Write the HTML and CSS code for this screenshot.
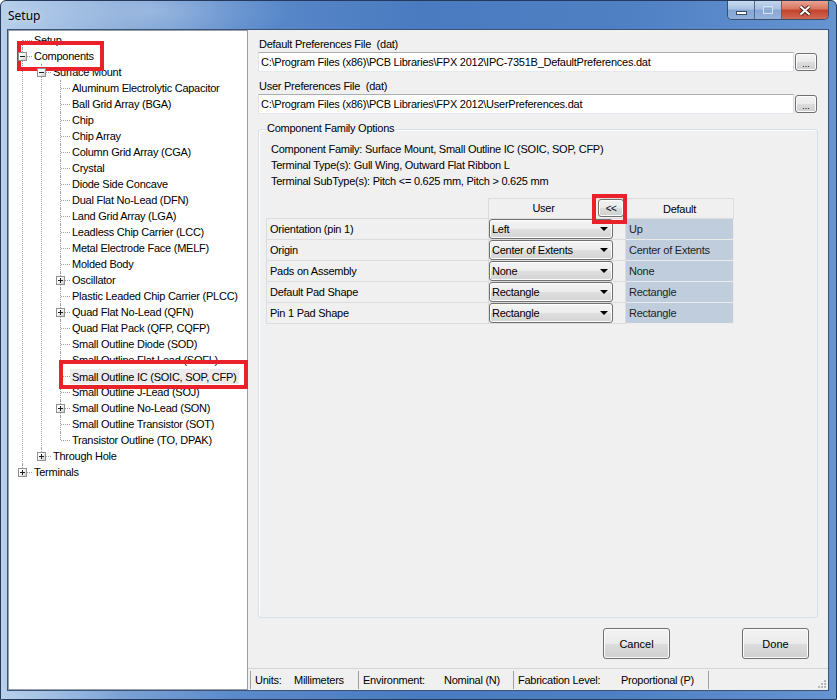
FILE: index.html
```html
<!DOCTYPE html>
<html>
<head>
<meta charset="utf-8">
<title>Setup</title>
<link rel="stylesheet" href="styles.css">
</head>
<body>
<div class="window">
  <div class="titlebar">
    <span class="title">Setup</span>
    <div class="caption">
      <span class="cbtn min"><svg width="13" height="6" viewBox="0 0 13 6"><rect x="1.5" y="1.5" width="10" height="3" fill="#fff" stroke="#3a4a60"/></svg></span>
      <span class="cbtn max"><svg width="12" height="10" viewBox="0 0 12 10"><rect x="1.5" y="1.5" width="9" height="7" fill="none" stroke="#d8e4f2" stroke-width="1"/><rect x="2.5" y="3.5" width="7" height="4" fill="none" stroke="#8fa9cc"/></svg></span>
      <span class="cbtn close"><svg width="14" height="11" viewBox="0 0 14 11"><path d="M2.5 1.5 L11.5 9.5 M11.5 1.5 L2.5 9.5" stroke="#4a2420" stroke-width="4"/><path d="M2.5 1.5 L11.5 9.5 M11.5 1.5 L2.5 9.5" stroke="#fff" stroke-width="2"/></svg></span>
    </div>
  </div>
  <div class="client">
    <div class="tree">
      <ul>
        <li><div class="row"><span class="txt">Setup</span></div></li>
        <li><div class="row"><span class="exp"></span><span class="txt">Components</span></div>
          <ul>
            <li><div class="row"><span class="exp"></span><span class="txt">Surface Mount</span></div>
              <ul>
                <li><div class="row"><span class="txt">Aluminum Electrolytic Capacitor</span></div></li>
                <li><div class="row"><span class="txt">Ball Grid Array (BGA)</span></div></li>
                <li><div class="row"><span class="txt">Chip</span></div></li>
                <li><div class="row"><span class="txt">Chip Array</span></div></li>
                <li><div class="row"><span class="txt">Column Grid Array (CGA)</span></div></li>
                <li><div class="row"><span class="txt">Crystal</span></div></li>
                <li><div class="row"><span class="txt">Diode Side Concave</span></div></li>
                <li><div class="row"><span class="txt">Dual Flat No-Lead (DFN)</span></div></li>
                <li><div class="row"><span class="txt">Land Grid Array (LGA)</span></div></li>
                <li><div class="row"><span class="txt">Leadless Chip Carrier (LCC)</span></div></li>
                <li><div class="row"><span class="txt">Metal Electrode Face (MELF)</span></div></li>
                <li><div class="row"><span class="txt">Molded Body</span></div></li>
                <li><div class="row"><span class="exp plus"></span><span class="txt">Oscillator</span></div></li>
                <li><div class="row"><span class="txt">Plastic Leaded Chip Carrier (PLCC)</span></div></li>
                <li><div class="row"><span class="exp plus"></span><span class="txt">Quad Flat No-Lead (QFN)</span></div></li>
                <li><div class="row"><span class="txt">Quad Flat Pack (QFP, CQFP)</span></div></li>
                <li><div class="row"><span class="txt">Small Outline Diode (SOD)</span></div></li>
                <li><div class="row"><span class="txt">Small Outline Flat Lead (SOFL)</span></div></li>
                <li><div class="row"><span class="txt sel">Small Outline IC (SOIC, SOP, CFP)</span></div></li>
                <li><div class="row"><span class="txt">Small Outline J-Lead (SOJ)</span></div></li>
                <li><div class="row"><span class="exp plus"></span><span class="txt">Small Outline No-Lead (SON)</span></div></li>
                <li><div class="row"><span class="txt">Small Outline Transistor (SOT)</span></div></li>
                <li><div class="row"><span class="txt">Transistor Outline (TO, DPAK)</span></div></li>
              </ul>
            </li>
            <li><div class="row"><span class="exp plus"></span><span class="txt">Through Hole</span></div></li>
          </ul>
        </li>
        <li><div class="row"><span class="exp plus"></span><span class="txt">Terminals</span></div></li>
      </ul>
    </div>
    <div class="main">
      <div class="lbl">Default Preferences File&nbsp; (dat)</div>
      <div class="filerow">
        <div class="textbox">C:\Program Files (x86)\PCB Libraries\FPX 2012\IPC-7351B_DefaultPreferences.dat</div>
        <span class="btn browse">...</span>
      </div>
      <div class="lbl">User Preferences File&nbsp; (dat)</div>
      <div class="filerow">
        <div class="textbox">C:\Program Files (x86)\PCB Libraries\FPX 2012\UserPreferences.dat</div>
        <span class="btn browse">...</span>
      </div>
      <div class="group">
        <div class="group-title">Component Family Options</div>
        <div class="info first">Component Family: Surface Mount, Small Outline IC (SOIC, SOP, CFP)</div>
        <div class="info">Terminal Type(s): Gull Wing, Outward Flat Ribbon L</div>
        <div class="info">Terminal SubType(s): Pitch &lt;= 0.625 mm, Pitch &gt; 0.625 mm</div>
        <div class="grid">
          <div class="cell hd blank"></div>
          <div class="cell hd user"><span class="hdtxt">User</span><span class="btn copy">&lt;&lt;</span></div>
          <div class="cell hd deflt">Default</div>

          <div class="cell name">Orientation (pin 1)</div>
          <div class="cell ucell"><div class="combo">Left<span class="arrow"></span></div></div>
          <div class="cell dval">Up</div>

          <div class="cell name">Origin</div>
          <div class="cell ucell"><div class="combo">Center of Extents<span class="arrow"></span></div></div>
          <div class="cell dval">Center of Extents</div>

          <div class="cell name">Pads on Assembly</div>
          <div class="cell ucell"><div class="combo">None<span class="arrow"></span></div></div>
          <div class="cell dval">None</div>

          <div class="cell name">Default Pad Shape</div>
          <div class="cell ucell"><div class="combo">Rectangle<span class="arrow"></span></div></div>
          <div class="cell dval">Rectangle</div>

          <div class="cell name">Pin 1 Pad Shape</div>
          <div class="cell ucell"><div class="combo">Rectangle<span class="arrow"></span></div></div>
          <div class="cell dval">Rectangle</div>
        </div>
      </div>
      <div class="actions">
        <span class="btn push">Cancel</span>
        <span class="btn push done">Done</span>
      </div>
      <div class="status">
        <div class="sp p1"><span class="k k1">Units:</span><span>Millimeters</span></div>
        <div class="sp p2"><span class="k k2">Environment:</span><span>Nominal (N)</span></div>
        <div class="sp p3"><span class="k k3">Fabrication Level:</span><span>Proportional (P)</span></div>
        <svg class="grip" width="10" height="10" viewBox="0 0 10 10">
          <rect x="7" y="1" width="2" height="2" fill="#b8b8b8"/>
          <rect x="4" y="4" width="2" height="2" fill="#b8b8b8"/>
          <rect x="7" y="4" width="2" height="2" fill="#b8b8b8"/>
          <rect x="1" y="7" width="2" height="2" fill="#b8b8b8"/>
          <rect x="4" y="7" width="2" height="2" fill="#b8b8b8"/>
          <rect x="7" y="7" width="2" height="2" fill="#b8b8b8"/>
        </svg>
      </div>
    </div>
  </div>
  <div class="mark m1"></div>
  <div class="mark m2"></div>
  <div class="mark m3"></div>
</div>
</body>
</html>
```
FILE: styles.css
```css
html, body {
  margin: 0;
  padding: 0;
  background: #ffffff;
}

.window {
  position: relative;
  width: 837px;
  height: 700px;
  box-sizing: border-box;
  border: 1px solid #26395a;
  border-radius: 6px 6px 0 0;
  padding: 0 7px 8px 6px;
  display: flex;
  flex-direction: column;
  background:
    radial-gradient(ellipse 140px 40px at 150px 10px, rgba(255,255,255,0.28), rgba(255,255,255,0) 100%),
    linear-gradient(to right, #b9d0ea 0%, #a2bfe3 6%, #7aa1d4 15%, #5b8acb 28%, #4a7bc0 50%, #4f80c4 75%, #6594d0 100%);
  font-family: "Liberation Sans", Arial, sans-serif;
  font-size: 11px;
  color: #000;
}

/* ---------- title bar ---------- */
.titlebar {
  height: 28px;
  display: flex;
  align-items: center;
  padding-left: 1px;
}
.title {
  font-family: "Noto Sans", "Open Sans", sans-serif;
  font-size: 12px;
  color: #000;
  text-shadow: 0 0 6px rgba(255,255,255,0.8);
}
.caption {
  margin-left: auto;
  align-self: flex-start;
  display: flex;
  height: 18px;
  border: 1px solid #3a4f70;
  border-top: none;
  border-radius: 0 0 5px 5px;
  overflow: hidden;
}
.cbtn {
  display: flex;
  align-items: center;
  justify-content: center;
  height: 18px;
}
.cbtn.min {
  width: 27px;
  border-right: 1px solid #4e6a92;
  background: linear-gradient(#c9dbef 0%, #a9c2e3 45%, #86a6d2 50%, #90b0db 100%);
  align-items: flex-end;
  padding-bottom: 3px;
  box-sizing: border-box;
}
.cbtn.max {
  width: 26px;
  border-right: 1px solid #4e6a92;
  background: linear-gradient(#c2d5ec 0%, #a6c0e2 45%, #87a7d3 50%, #95b3dc 100%);
}
.cbtn.close {
  width: 46px;
  background: linear-gradient(#e8a493 0%, #d9735f 45%, #c3412b 50%, #cf6a53 100%);
}

/* ---------- client ---------- */
.client {
  display: flex;
  height: 662px;
  box-sizing: border-box;
  border: 1px solid #3a5478;
  background: #f0f0f0;
}

/* ---------- tree ---------- */
.tree {
  width: 240px;
  flex: none;
  box-sizing: border-box;
  background: #ffffff;
  border: 1px solid #9aa0a8;
  padding-top: 1px;
  letter-spacing: -0.25px;
  overflow: hidden;
}
.tree ul {
  list-style: none;
  margin: 0;
  padding: 0;
}
.tree ul ul {
  padding-left: 19px;
}
.tree li {
  position: relative;
}
.tree li::before {
  content: "";
  position: absolute;
  left: 13px;
  top: 0;
  bottom: 0;
  border-left: 1px dotted #a0a0a0;
}
.tree > ul > li:first-child::before {
  top: 8px;
}
.tree li:last-child::before {
  bottom: auto;
  height: 8px;
}
.tree > ul > li:first-child:last-child::before {
  height: 0;
}
.row {
  position: relative;
  height: 16px;
  display: flex;
  align-items: center;
  padding-left: 25px;
  white-space: nowrap;
}
.row::before {
  content: "";
  position: absolute;
  left: 14px;
  top: 8px;
  width: 9px;
  border-top: 1px dotted #a0a0a0;
}
.txt {
  line-height: 14px;
}
.txt.sel {
  background: #ececec;
  padding: 1px 2px 0 2px;
  margin-left: -2px;
}
.exp {
  position: absolute;
  left: 9px;
  top: 4px;
  width: 9px;
  height: 9px;
  box-sizing: border-box;
  border: 1px solid #919191;
  background: linear-gradient(135deg, #ffffff 35%, #c9c9c9 100%);
  z-index: 1;
}
.exp::before {
  content: "";
  position: absolute;
  left: 1px;
  top: 3px;
  width: 5px;
  height: 1px;
  background: #1e1e1e;
}
.exp.plus::after {
  content: "";
  position: absolute;
  left: 3px;
  top: 1px;
  width: 1px;
  height: 5px;
  background: #1e1e1e;
}

/* ---------- main panel ---------- */
.main {
  flex: 1;
  display: flex;
  flex-direction: column;
  letter-spacing: -0.25px;
}
.lbl {
  margin: 7px 0 1px 11px;
  line-height: 14px;
}
.filerow {
  display: flex;
  align-items: center;
  margin-left: 10px;
  height: 20px;
}
.textbox {
  width: 536px;
  height: 20px;
  box-sizing: border-box;
  background: #ffffff;
  border: 1px solid;
  border-color: #abadb3 #dbdfe6 #e3e9ef #e2e3ea;
  padding-left: 2px;
  line-height: 18px;
  white-space: nowrap;
  overflow: hidden;
}
.btn {
  box-sizing: border-box;
  border: 1px solid #707070;
  border-radius: 3px;
  background: linear-gradient(#f2f2f2 0%, #ebebeb 50%, #dddddd 50%, #cfcfcf 100%);
  box-shadow: inset 0 0 0 1px #fbfbfb;
  display: flex;
  align-items: center;
  justify-content: center;
  color: #000;
}
.browse {
  width: 22px;
  height: 18px;
  margin-left: 1px;
  font-size: 9px;
  line-height: 1;
  padding-top: 4px;
  letter-spacing: 0;
}

/* ---------- group ---------- */
.group {
  flex: 1;
  margin: 15px 10px 0 10px;
  border: 1px solid #d5dfe5;
  border-radius: 3px;
  box-shadow: inset 1px 1px 0 #ffffff;
  padding-left: 0;
}
.group-title {
  margin: -9px 0 0 6px;
  padding: 0 2px;
  width: fit-content;
  background: #f0f0f0;
  line-height: 14px;
}
.info {
  margin-left: 12px;
  line-height: 16px;
}
.info.first {
  margin-top: 6px;
}

/* ---------- grid ---------- */
.grid {
  display: grid;
  grid-template-columns: 223px 137px 108px;
  grid-auto-rows: 21px;
  margin: 9px 0 0 7px;
  width: fit-content;
}
.cell {
  box-sizing: border-box;
  border-right: 1px solid #dcdcdc;
  border-bottom: 1px solid #dcdcdc;
  display: flex;
  align-items: center;
  white-space: nowrap;
}
.cell.hd {
  border-top: 1px solid #dcdcdc;
}
.cell.hd.blank {
  border-top: none;
}
.cell.name {
  border-left: 1px solid #dcdcdc;
  padding-left: 3px;
}
.cell.user {
  align-items: flex-start;
}
.hdtxt {
  flex: 1;
  text-align: center;
  line-height: 19px;
}
.copy {
  width: 26px;
  height: 18px;
  margin-right: 1px;
  font-size: 10px;
  letter-spacing: -0.5px;
}
.cell.deflt {
  justify-content: center;
}
.cell.ucell {
  align-items: flex-start;
}
.combo {
  position: relative;
  width: 124px;
  height: 20px;
  box-sizing: border-box;
  border: 1px solid #707070;
  border-radius: 3px;
  background: linear-gradient(#f4f4f4 0%, #ececec 50%, #dfdfdf 50%, #d3d3d3 100%);
  box-shadow: inset 0 0 0 1px #fcfcfc;
  padding-left: 2px;
  line-height: 18px;
}
.arrow {
  position: absolute;
  right: 4px;
  top: 7px;
  width: 0;
  height: 0;
  border-left: 4px solid transparent;
  border-right: 4px solid transparent;
  border-top: 4px solid #000;
}
.cell.dval {
  background: #bfcddc;
  padding-left: 3px;
  color: #1e1e1e;
  border-color: #ebebeb;
}

/* ---------- buttons ---------- */
.actions {
  display: flex;
  margin: 10px 0 9px 355px;
}
.push {
  width: 67px;
  height: 31px;
  letter-spacing: 0;
}
.push.done {
  margin-left: 72px;
}

/* ---------- status bar ---------- */
.status {
  height: 22px;
  box-sizing: border-box;
  border-top: 1px solid #d4d4d4;
  display: flex;
  align-items: stretch;
  padding: 2px 0 1px 2px;
  background: #f0f0f0;
}
.sp {
  display: flex;
  align-items: center;
  box-sizing: border-box;
  border-left: 1px solid #a0a0a0;
  padding-left: 4px;
  white-space: nowrap;
}
.p1 { width: 108px; }
.p2 { width: 155px; }
.p3 { width: 196px; border-right: 1px solid #a0a0a0; }
.k1 { width: 39px; }
.k2 { width: 81px; }
.k3 { width: 103px; }
.grip {
  margin-left: auto;
  margin-right: 1px;
  align-self: flex-end;
}

/* ---------- red annotation marks ---------- */
.mark {
  position: absolute;
  box-sizing: border-box;
  border: 4px solid #e8212b;
}
.m1 { left: 16px; top: 40px; width: 87px; height: 30px; }
.m2 { left: 58px; top: 359px; width: 189px; height: 29px; }
.m3 { left: 591px; top: 193px; width: 35px; height: 30px; }
```
